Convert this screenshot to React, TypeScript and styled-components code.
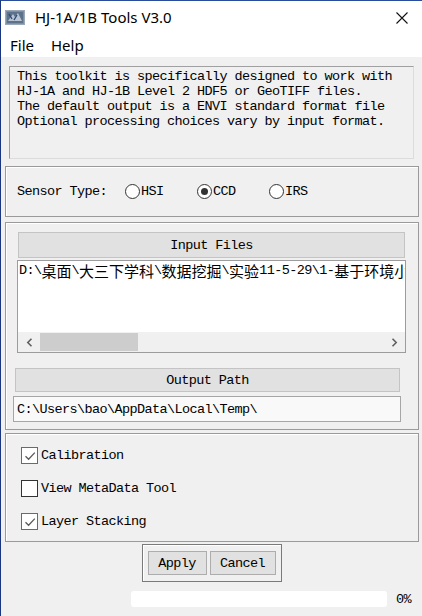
import React from 'react';
import styled, { createGlobalStyle } from 'styled-components';

const MONO = `'Liberation Mono', 'DejaVu Sans Mono', monospace`;
const CJK = `'Noto Sans CJK SC', sans-serif`;
const UI = `'Noto Sans', 'Open Sans', sans-serif`;

const GlobalStyle = createGlobalStyle`
    html, body {
        margin: 0;
        padding: 0;
        background: #f0f0f0;
    }
    body {
        width: 422px;
        height: 616px;
        overflow: hidden;
    }
`;

const DESCRIPTION = [
    'This toolkit is specifically designed to work with',
    'HJ-1A and HJ-1B Level 2 HDF5 or GeoTIFF files.',
    'The default output is a ENVI standard format file',
    'Optional processing choices vary by input format.',
];

const SENSORS = ['HSI', 'CCD', 'IRS'];

const OPTIONS = [
    { label: 'Calibration', checked: true },
    { label: 'View MetaData Tool', checked: false },
    { label: 'Layer Stacking', checked: true },
];

const INPUT_FILE = 'D:\\桌面\\大三下学科\\数据挖掘\\实验11-5-29\\1-基于环境小卫星数据';

// split mixed text so the CJK part gets a full-width font
const MixedText: React.FC<{ text: string }> = ({ text }) => (
    <>
        {text.split(/([\u4e00-\u9fff]+)/).map((part, i) =>
            /[\u4e00-\u9fff]/.test(part) ? <Cjk key={i}>{part}</Cjk> : <span key={i}>{part}</span>
        )}
    </>
);

const AppIcon = () => (
    <svg width="20" height="15" viewBox="0 0 20 15">
        <rect x="0.5" y="0.5" width="19" height="14" fill="#7d8fa3" stroke="#9aa8b8" />
        <rect x="2" y="2" width="16" height="11" fill="#5c718a" />
        <path d="M3 11 L8 4 L10 7 L13 3 L17 11 Z" fill="#cfd8e2" opacity="0.8" />
        <path d="M4 4 L7 9 M9 10 L12 5" stroke="#2d4a78" strokeWidth="1.4" />
    </svg>
);

const CloseIcon = () => (
    <svg width="12" height="12" viewBox="0 0 12 12">
        <path d="M0.5 0.5 L11.5 11.5 M11.5 0.5 L0.5 11.5" stroke="#111" strokeWidth="1.1" />
    </svg>
);

const Chevron: React.FC<{ dir: 'left' | 'right' }> = ({ dir }) => (
    <svg width="7" height="9" viewBox="0 0 7 9">
        <path
            d={dir === 'left' ? 'M5.5 0.8 L1.8 4.5 L5.5 8.2' : 'M1.5 0.8 L5.2 4.5 L1.5 8.2'}
            fill="none"
            stroke="#606060"
            strokeWidth="1.6"
        />
    </svg>
);

const App: React.FC = () => {
    return (
        <Window>
            <GlobalStyle />
            <TitleBar>
                <IconSlot>
                    <AppIcon />
                </IconSlot>
                <Title>HJ-1A/1B Tools V3.0</Title>
                <CloseButton>
                    <CloseIcon />
                </CloseButton>
            </TitleBar>
            <MenuBar>
                <MenuItem>File</MenuItem>
                <MenuItem>Help</MenuItem>
            </MenuBar>
            <Body>
                <Description>
                    {DESCRIPTION.map((line) => (
                        <DescLine key={line}>{line}</DescLine>
                    ))}
                </Description>

                <GroupBox height={51} top={7}>
                    <SensorRow>
                        <MonoLabel>Sensor Type:</MonoLabel>
                        {SENSORS.map((s) => (
                            <RadioItem key={s}>
                                <RadioCircle selected={s === 'CCD'} />
                                <MonoLabel>{s}</MonoLabel>
                            </RadioItem>
                        ))}
                    </SensorRow>
                </GroupBox>

                <GroupBox height={208} top={5}>
                    <HeaderBar left={12} width={387} height={26} top={9}>
                        Input Files
                    </HeaderBar>
                    <FileList>
                        <FileLine>
                            <MixedText text={INPUT_FILE} />
                        </FileLine>
                        <HScroll>
                            <ScrollArrow>
                                <Chevron dir="left" />
                            </ScrollArrow>
                            <ScrollTrack>
                                <ScrollThumb />
                            </ScrollTrack>
                            <ScrollArrow>
                                <Chevron dir="right" />
                            </ScrollArrow>
                        </HScroll>
                    </FileList>
                    <HeaderBar left={9} width={385} height={24} top={15}>
                        Output Path
                    </HeaderBar>
                    <PathField>C:\Users\bao\AppData\Local\Temp\</PathField>
                </GroupBox>

                <GroupBox height={109} top={3}>
                    <OptionList>
                        {OPTIONS.map((o) => (
                            <OptionRow key={o.label}>
                                <CheckBox checked={o.checked}>
                                    {o.checked && (
                                        <svg width="14" height="14" viewBox="0 0 14 14">
                                            <path
                                                d="M2.5 7.2 L5.6 10.3 L11.8 3.6"
                                                fill="none"
                                                stroke="#5a5a5a"
                                                strokeWidth="1.3"
                                            />
                                        </svg>
                                    )}
                                </CheckBox>
                                <MonoLabel>{o.label}</MonoLabel>
                            </OptionRow>
                        ))}
                    </OptionList>
                </GroupBox>

                <ButtonBox>
                    <Button width={59}>Apply</Button>
                    <Button width={66}>Cancel</Button>
                </ButtonBox>

                <ProgressRow>
                    <ProgressBar />
                    <Percent>0%</Percent>
                </ProgressRow>
            </Body>
        </Window>
    );
};

const Window = styled.div`
    width: 422px;
    height: 616px;
    box-sizing: border-box;
    border-top: 1px solid #2a4c9c;
    border-left: 1px solid #1a3680;
    background: #f0f0f0;
    display: flex;
    flex-direction: column;
    overflow: hidden;
`;

const TitleBar = styled.div`
    height: 31px;
    flex-shrink: 0;
    background: #ffffff;
    display: flex;
    align-items: center;
`;

const IconSlot = styled.div`
    display: flex;
    margin-left: 4px;
    margin-top: 1px;
`;

const Title = styled.span`
    margin-left: 10px;
    font-family: ${UI};
    font-size: 15px;
    color: #000;
    margin-top: 1px;
`;

const CloseButton = styled.div`
    display: flex;
    margin-left: auto;
    margin-right: 14px;
    margin-top: 3px;
`;

const MenuBar = styled.div`
    height: 25px;
    flex-shrink: 0;
    background: #ffffff;
    display: flex;
    align-items: center;
    padding-left: 9px;
`;

const MenuItem = styled.span`
    font-family: ${UI};
    font-size: 15px;
    color: #000;
    margin-right: 17px;
`;

const Body = styled.div`
    display: flex;
    flex-direction: column;
    padding-top: 9px;
`;

const Description = styled.div`
    margin-left: 8px;
    width: 405px;
    height: 93px;
    box-sizing: border-box;
    border: 1px solid;
    border-color: #a0a0a0 #dcdcdc #dcdcdc #a0a0a0;
    background: #f0f0f0;
    padding: 2px 0 0 7px;
`;

const DescLine = styled.div`
    font-family: ${MONO};
    font-size: 13.5px;
    letter-spacing: -0.6px;
    line-height: 15px;
    color: #000;
    white-space: pre;
`;

const GroupBox = styled.div<{ height: number; top: number }>`
    margin: ${(p) => p.top}px 0 0 4px;
    width: 414px;
    height: ${(p) => p.height}px;
    box-sizing: border-box;
    border: 1px solid #9a9a9a;
    box-shadow: inset 1px 1px 0 #ffffff;
    display: flex;
    flex-direction: column;
`;

const SensorRow = styled.div`
    display: flex;
    align-items: center;
    height: 100%;
    padding-left: 11px;
`;

const MonoLabel = styled.span`
    font-family: ${MONO};
    font-size: 13.5px;
    letter-spacing: -0.6px;
    color: #000;
    white-space: pre;
`;

const RadioItem = styled.div`
    display: flex;
    align-items: center;
    width: 72px;
    gap: 1px;
    &:first-of-type {
        margin-left: 18px;
    }
`;

const RadioCircle = styled.span<{ selected: boolean }>`
    width: 15px;
    height: 15px;
    box-sizing: border-box;
    border-radius: 50%;
    border: 1px solid #333;
    background: #fff;
    display: flex;
    align-items: center;
    justify-content: center;
    &::after {
        content: '';
        display: ${(p) => (p.selected ? 'block' : 'none')};
        width: 7px;
        height: 7px;
        border-radius: 50%;
        background: #333;
    }
`;

const HeaderBar = styled.div<{ left: number; width: number; height: number; top: number }>`
    margin: ${(p) => p.top}px 0 0 ${(p) => p.left}px;
    width: ${(p) => p.width}px;
    height: ${(p) => p.height}px;
    box-sizing: border-box;
    border: 1px solid #c4c4c4;
    background: #e1e1e1;
    display: flex;
    align-items: center;
    justify-content: center;
    font-family: ${MONO};
    font-size: 13.5px;
    letter-spacing: -0.6px;
    color: #000;
`;

const FileList = styled.div`
    margin: 2px 0 0 11px;
    width: 389px;
    height: 93px;
    box-sizing: border-box;
    border: 1px solid #9c9c9c;
    background: #ffffff;
    display: flex;
    flex-direction: column;
    overflow: hidden;
`;

const FileLine = styled.div`
    padding-left: 1px;
    height: 19px;
    display: flex;
    align-items: center;
    white-space: nowrap;
    overflow: hidden;
    font-family: ${MONO};
    font-size: 13.5px;
    letter-spacing: -0.6px;
    color: #000;
`;

const Cjk = styled.span`
    font-family: ${CJK};
    font-size: 15px;
    letter-spacing: 0;
`;

const HScroll = styled.div`
    margin-top: auto;
    height: 20px;
    background: #f0f0f0;
    display: flex;
    align-items: center;
`;

const ScrollArrow = styled.div`
    width: 22px;
    height: 100%;
    display: flex;
    align-items: center;
    justify-content: center;
`;

const ScrollTrack = styled.div`
    flex: 1;
    height: 100%;
    display: flex;
    align-items: center;
`;

const ScrollThumb = styled.div`
    width: 98px;
    height: 18px;
    background: #cdcdcd;
`;

const PathField = styled.div`
    margin: 4px 0 0 7px;
    width: 388px;
    height: 26px;
    box-sizing: border-box;
    border: 1px solid #a6a6a6;
    background: #f9f9f9;
    padding-left: 3px;
    display: flex;
    align-items: center;
    font-family: ${MONO};
    font-size: 13.5px;
    letter-spacing: -0.6px;
    color: #000;
    white-space: pre;
`;

const OptionList = styled.div`
    display: flex;
    flex-direction: column;
    gap: 16px;
    padding: 13px 0 0 15px;
`;

const OptionRow = styled.div`
    display: flex;
    align-items: center;
    gap: 3px;
    height: 17px;
`;

const CheckBox = styled.span<{ checked: boolean }>`
    width: 17px;
    height: 17px;
    box-sizing: border-box;
    border: 1px solid ${(p) => (p.checked ? '#6a6a6a' : '#333333')};
    background: #ffffff;
    display: flex;
    align-items: center;
    justify-content: center;
`;

const ButtonBox = styled.div`
    margin: 2px auto 0;
    width: 140px;
    height: 38px;
    box-sizing: border-box;
    border: 1px solid #7a7a7a;
    box-shadow: inset 1px 1px 0 #ffffff;
    display: flex;
    gap: 3px;
    padding: 6px 0 0 5px;
`;

const Button = styled.div<{ width: number }>`
    width: ${(p) => p.width}px;
    height: 24px;
    box-sizing: border-box;
    border: 1px solid #adadad;
    background: #e1e1e1;
    display: flex;
    align-items: center;
    justify-content: center;
    font-family: ${MONO};
    font-size: 13.5px;
    letter-spacing: -0.6px;
    color: #000;
`;

const ProgressRow = styled.div`
    display: flex;
    align-items: center;
    margin-top: 9px;
    padding-left: 130px;
`;

const ProgressBar = styled.div`
    width: 256px;
    height: 16px;
    border-radius: 3px;
    background: #ffffff;
`;

const Percent = styled.span`
    margin-left: 9px;
    font-family: ${MONO};
    font-size: 13.5px;
    letter-spacing: -0.6px;
    color: #000;
`;

export default App;
